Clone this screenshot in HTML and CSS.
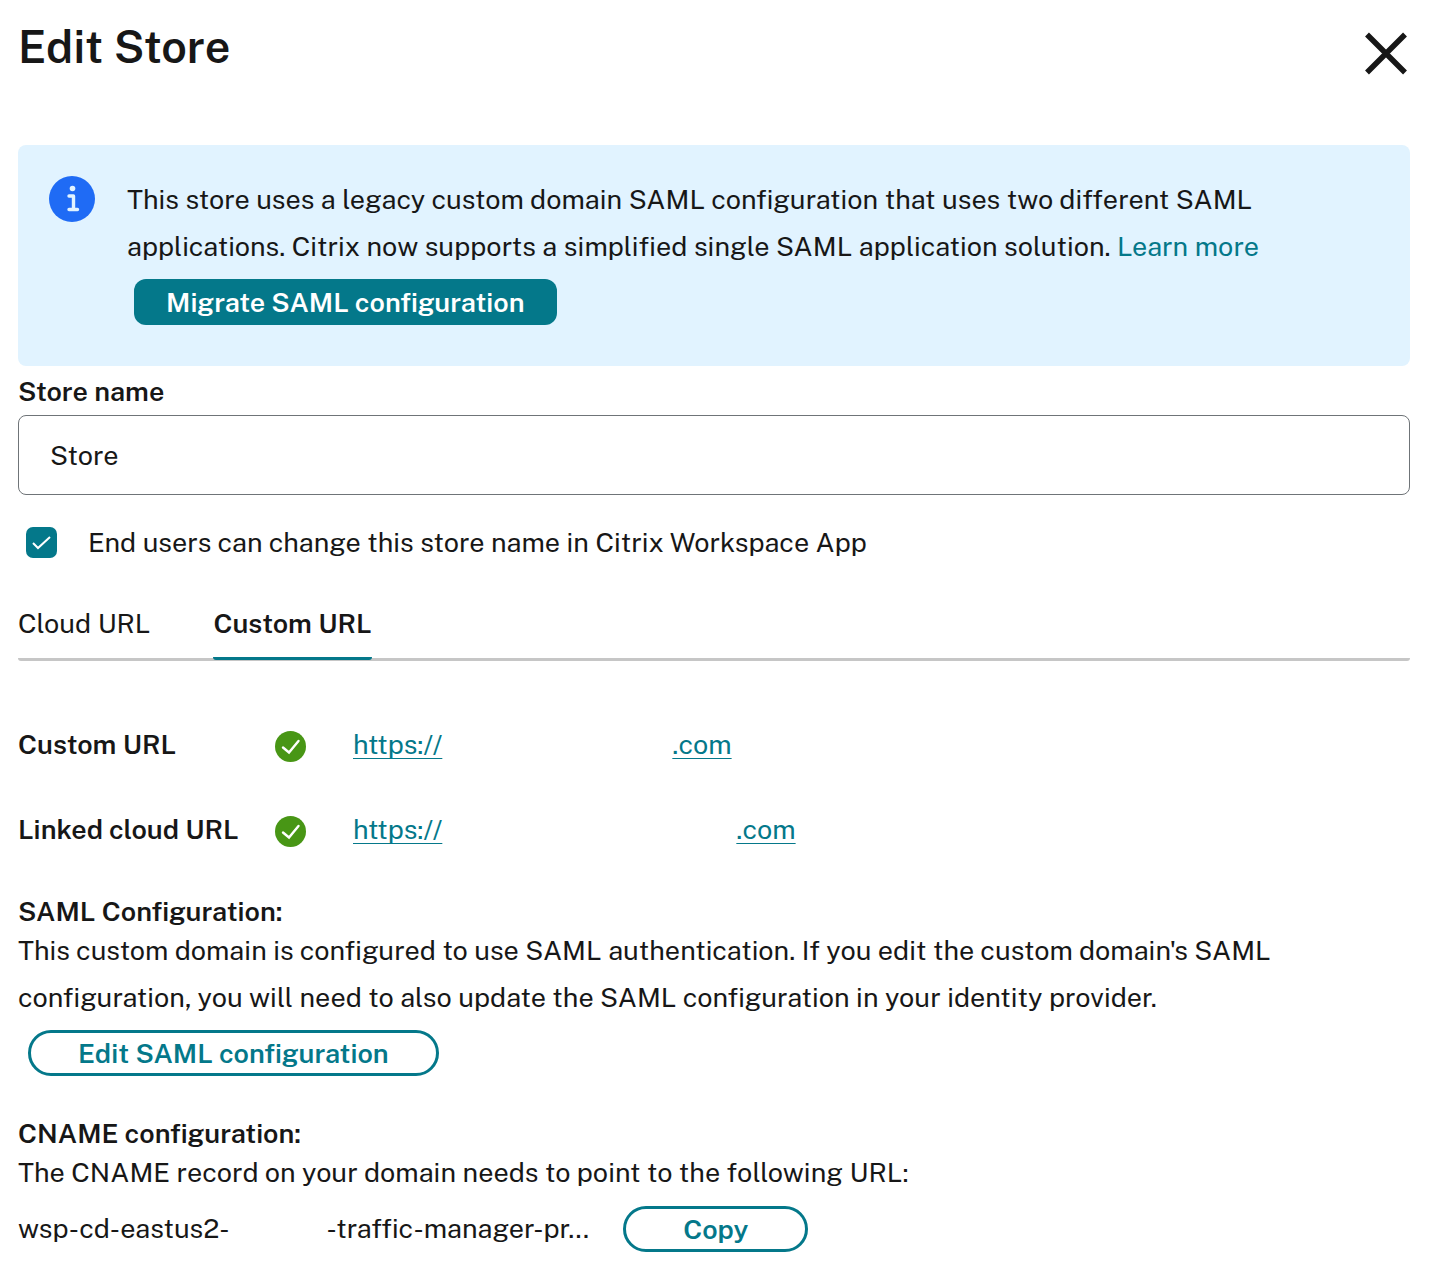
FILE: index.html
```html
<!DOCTYPE html>
<html lang="en">
<head>
    <meta charset="UTF-8">
    <meta name="viewport" content="width=device-width, initial-scale=1.0">
    <title>Edit Store</title>
    <link rel="stylesheet" href="styles.css">
</head>
<body>
    <header class="page-header">
        <h1>Edit Store</h1>
        <button class="close-btn" type="button" aria-label="Close">
            <svg viewBox="0 0 48 48" width="48" height="48"><path d="M5 4.500L43 42.500M43 4.500L5 42.500" stroke="#171717" stroke-width="5.500" fill="none"/></svg>
        </button>
    </header>
    <main>
        <section class="notice">
            <svg class="notice-icon" viewBox="0 0 46 46" width="46" height="46">
                <circle cx="23" cy="23" r="23" fill="#1f6bf5"/>
                <circle cx="23.500" cy="12.500" r="2.800" fill="#e1f3ff"/>
                <path d="M20 20H24.500V33.500M20 33.500H28.500" stroke="#e1f3ff" stroke-width="3.400" stroke-linecap="round" stroke-linejoin="round" fill="none"/>
            </svg>
            <div class="notice-body">
                <p>This store uses a legacy custom domain SAML configuration that uses two different SAML applications. Citrix now supports a simplified single SAML application solution. <a href="#">Learn more</a></p>
                <button class="btn btn-primary" type="button">Migrate SAML configuration</button>
            </div>
        </section>

        <form class="store-form">
            <label class="field-label" for="storeName">Store name</label>
            <input class="text-input" type="text" id="storeName" value="Store">
            <div class="check-row">
                <input type="checkbox" id="allowRename" checked>
                <label for="allowRename">End users can change this store name in Citrix Workspace App</label>
            </div>
        </form>

        <div class="tabs" role="tablist">
            <button class="tab" type="button" role="tab" aria-selected="false">Cloud URL</button>
            <button class="tab active" type="button" role="tab" aria-selected="true">Custom URL</button>
        </div>

        <div class="url-list">
            <div class="url-row">
                <h2>Custom URL</h2>
                <svg class="status-icon" viewBox="0 0 31 31" width="31" height="31"><circle cx="15.500" cy="15.500" r="15.500" fill="#489615"/><path d="M8 16.500L14 21.500L23.500 10" stroke="#fff" stroke-width="2.400" stroke-linecap="round" fill="none"/></svg>
                <div class="url-parts">
                    <a href="#">https://</a>
                    <a href="#">.com</a>
                </div>
            </div>
            <div class="url-row">
                <h2>Linked cloud URL</h2>
                <svg class="status-icon" viewBox="0 0 31 31" width="31" height="31"><circle cx="15.500" cy="15.500" r="15.500" fill="#489615"/><path d="M8 16.500L14 21.500L23.500 10" stroke="#fff" stroke-width="2.400" stroke-linecap="round" fill="none"/></svg>
                <div class="url-parts url-parts-wide">
                    <a href="#">https://</a>
                    <a href="#">.com</a>
                </div>
            </div>
        </div>

        <section class="config">
            <h2>SAML Configuration:</h2>
            <p>This custom domain is configured to use SAML authentication. If you edit the custom domain's SAML configuration, you will need to also update the SAML configuration in your identity provider.</p>
            <button class="btn btn-outline btn-edit" type="button">Edit SAML configuration</button>
        </section>

        <section class="config">
            <h2>CNAME configuration:</h2>
            <p>The CNAME record on your domain needs to point to the following URL:</p>
            <div class="cname-row">
                <div class="cname">
                    <span>wsp-cd-eastus2-</span>
                    <span>-traffic-manager-pr...</span>
                </div>
                <button class="btn btn-outline btn-copy" type="button">Copy</button>
            </div>
        </section>
    </main>
</body>
</html>
```
FILE: styles.css
```css
* {
    box-sizing: border-box;
}

body {
    margin: 0;
    padding: 16px 22px 0 18px;
    background-color: #fff;
    color: #171717;
    font-family: "Public Sans", Inter, "Liberation Sans", sans-serif;
    font-size: 27px;
    line-height: 47px;
}

h1,
h2,
p {
    margin: 0;
}

h2,
.field-label {
    padding-bottom: 2px;
    font-size: 27px;
    font-weight: 600;
    line-height: 28px;
}

a {
    color: #04788a;
    text-decoration: none;
}

button,
input {
    font: inherit;
    color: inherit;
}

.page-header {
    display: flex;
    justify-content: space-between;
    align-items: flex-start;
    height: 129px;
}

.page-header h1 {
    font-size: 45px;
    font-weight: 600;
    line-height: 62px;
}

.close-btn {
    margin-top: 14px;
    padding: 0;
    border: none;
    background: none;
    line-height: 0;
    cursor: pointer;
}

.notice {
    display: flex;
    gap: 32px;
    padding: 31px;
    padding-bottom: 41px;
    border-radius: 8px;
    background-color: #e1f3ff;
}

.notice-icon,
.status-icon {
    flex: none;
}

.notice-body .btn {
    margin-left: 7px;
}

.btn {
    display: block;
    height: 46px;
    padding: 0 32px;
    font-weight: 600;
    line-height: 40px;
    cursor: pointer;
}

.btn-primary {
    margin-top: 9px;
    border: none;
    border-radius: 12px;
    background-color: #04788a;
    color: #fff;
}

.btn-outline {
    border: 3px solid #04788a;
    border-radius: 23px;
    background-color: #fff;
    color: #04788a;
}

.field-label {
    display: block;
    padding: 11px 0 10px;
}

.text-input {
    display: block;
    width: 100%;
    height: 80px;
    padding: 0 31px;
    border: 1px solid #6f7478;
    border-radius: 8px;
}

.check-row {
    display: flex;
    align-items: center;
    gap: 31px;
    padding: 24px 8px;
}

.check-row input {
    appearance: none;
    width: 31px;
    height: 31px;
    margin: 0;
    border-radius: 7px;
    background: #04788a url("data:image/svg+xml,%3Csvg xmlns='http://www.w3.org/2000/svg' viewBox='0 0 31 31'%3E%3Cpath d='M7 16L12 21L24 10' fill='none' stroke='white' stroke-width='2'/%3E%3C/svg%3E");
}

.tabs {
    display: flex;
    gap: 63px;
    border-bottom: 3px solid #c6c6c6;
    border-radius: 3px;
}

.tab {
    height: 70px;
    margin-bottom: -2px;
    padding: 0;
    border: none;
    border-bottom: 3px solid transparent;
    border-radius: 3px;
    background: none;
    cursor: pointer;
}

.tab.active {
    border-color: #04788a;
    font-weight: 600;
}

.url-list {
    padding: 41px 0 25px;
}

.url-row {
    display: grid;
    grid-template-columns: 257px 78px 1fr;
    align-items: center;
    height: 85px;
}

.url-row a {
    text-decoration: underline;
    text-decoration-thickness: 1px;
    text-underline-offset: 4px;
}

.status-icon {
    margin-top: 3px;
}

.url-parts {
    display: flex;
    gap: 230px;
}

.url-parts-wide {
    gap: 294px;
}

.config {
    padding-bottom: 43px;
}

.btn-edit {
    margin: 9px 10px 0;
    padding: 0 47px;
}

.cname-row {
    display: flex;
    align-items: center;
    gap: 34px;
    margin-top: 9px;
}

.cname {
    display: flex;
    gap: 97px;
}

.btn-copy {
    padding: 0 57px;
}
```
